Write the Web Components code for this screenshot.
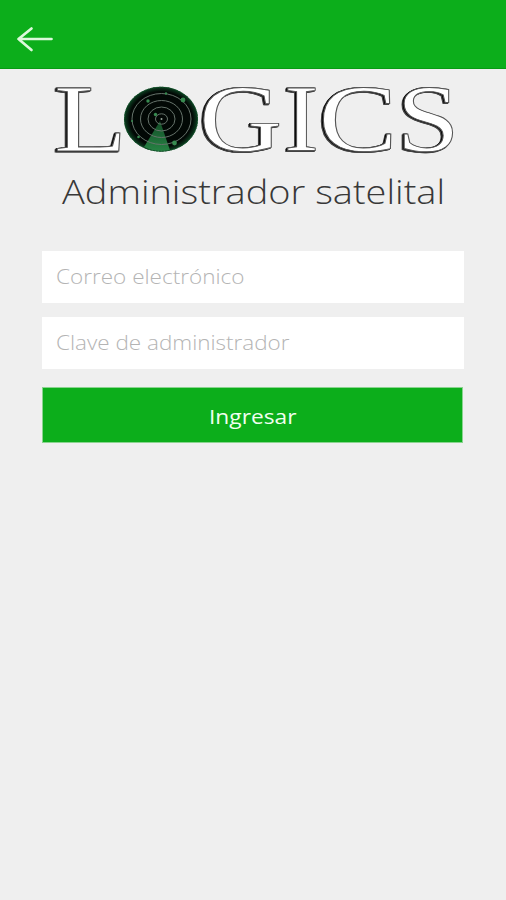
<!DOCTYPE html>
<html lang="es">
<head>
<meta charset="utf-8">
<title>Administrador satelital</title>
<style>
html,body{margin:0;height:100%;background:#efefef}
</style>
</head>
<body>
<login-screen></login-screen>
<script>
// Wide text: a line of text fitted to a given ink width.
class WideText extends HTMLElement {
  connectedCallback() {
    const a = n => this.getAttribute(n);
    this.attachShadow({mode: 'open'}).innerHTML = `
      <style>:host{display:block;line-height:0}
      svg{display:block;overflow:visible}
      text{font-family:"Open Sans","Noto Sans",sans-serif;font-size:${a('size')}px;font-weight:${a('weight')};fill:currentColor}</style>
      <svg width="${a('width')}" height="${a('height')}"><text x="0" y="${a('baseline')}" textLength="${a('width')}" lengthAdjust="spacingAndGlyphs"></text></svg>`;
    this.shadowRoot.querySelector('text').textContent = a('text');
  }
}
customElements.define('wide-text', WideText);

class TopBar extends HTMLElement {
  connectedCallback() {
    this.attachShadow({mode: 'open'}).innerHTML = `
      <style>:host{display:flex;box-sizing:border-box;height:69px;padding:26px 0 0 16px;background:#0cae1b;border-bottom:1px solid #079b13}
      svg{display:block}</style>
      <svg width="37" height="26" viewBox="0 0 37 26" fill="none" stroke="#dcf9db" stroke-width="2.7" stroke-linecap="round" stroke-linejoin="round"><path d="M35.5 13H2.5M15.5 2.5L2.5 13L15.5 24"/></svg>`;
  }
}
customElements.define('top-bar', TopBar);

class BrandLogo extends HTMLElement {
  connectedCallback() {
    const glyphs = [['L',53.8,1.27],['G',199,1.22],['I',284,1.11],['C',318.6,1.25],['S',396.5,1.2]];
    const letters = glyphs.map(([c,x,s]) =>
      `<text transform="translate(${x} 151) scale(${s} 1)">${c}</text>`).join('');
    const rings = [[6,5.2],[13.5,12],[21,18.5],[29.5,25.5]].map(([x,y]) => `<ellipse rx="${x}" ry="${y}"/>`).join('');
    this.attachShadow({mode: 'open'}).innerHTML = `
      <style>:host{display:block;height:90px}
      svg{display:block;overflow:visible}
      text{font-family:"Liberation Serif",serif;font-size:94.5px;fill:#fff;stroke:#555;stroke-width:.9}
      .word{filter:drop-shadow(-1px 0 0 #080808) drop-shadow(-1px 1px 0 rgba(8,8,8,.75))}</style>
      <svg width="506" height="90" viewBox="0 69 506 90">
        <defs><radialGradient id="disc"><stop offset=".85" stop-color="#020805"/><stop offset="1" stop-color="#0c4222"/></radialGradient>
        <linearGradient id="beam" x1="0" y1="0" x2="0" y2="1"><stop offset="0" stop-color="#134d27"/><stop offset="1" stop-color="#278344"/></linearGradient></defs>
        <g class="word">${letters}</g>
        <ellipse cx="161" cy="119.2" rx="37" ry="32.5" fill="url(#disc)"/>
        <path d="M160 121L144 147Q156 153.5 170 150.3Z" fill="url(#beam)"/>
        <g transform="translate(161.5 119)" fill="none" stroke="#66736b" stroke-width="1">${rings}</g>
        <ellipse cx="161" cy="119.2" rx="36.5" ry="32" fill="none" stroke="#14552b" stroke-width="1" stroke-dasharray="2 1"/>
        <g fill="#378b50"><circle cx="183" cy="100" r="2.4"/><circle cx="148" cy="101" r="1.7"/><circle cx="174.5" cy="143" r="2.4"/><circle cx="155.5" cy="114.5" r="1.7"/><circle cx="138.5" cy="137" r="1.3"/><circle cx="166" cy="93.5" r="1.2"/><circle cx="132" cy="121" r="1"/></g>
        <circle cx="161.5" cy="119" r="1" fill="#9aa89e"/>
      </svg>`;
  }
}
customElements.define('brand-logo', BrandLogo);

class FormField extends HTMLElement {
  connectedCallback() {
    this.attachShadow({mode: 'open'}).innerHTML = `
      <style>:host{display:block;box-sizing:border-box;padding-left:14px;background:#fff;color:#b4b4b4}</style><slot></slot>`;
  }
}
customElements.define('form-field', FormField);

class SubmitButton extends HTMLElement {
  connectedCallback() {
    this.attachShadow({mode: 'open'}).innerHTML = `
      <style>:host{display:block}
      button{display:flex;justify-content:center;box-sizing:border-box;width:100%;height:100%;margin:0;padding:0;border:1px solid #8ad48f;background:#0cae1b;color:#f1fff0}</style>
      <button><slot></slot></button>`;
  }
}
customElements.define('submit-button', SubmitButton);

class LoginScreen extends HTMLElement {
  connectedCallback() {
    this.attachShadow({mode: 'open'}).innerHTML = `
      <style>
      :host{display:flex;flex-direction:column;width:506px;height:900px;background:#efefef;overflow:hidden}
      .title{margin-left:61.5px;height:92px;color:#383838}
      form{display:flex;flex-direction:column;margin:0 42px}
      .mail{height:52px;margin-bottom:14px}
      .key{height:52px;margin-bottom:18px}
      submit-button{width:421px;height:56px}
      </style>
      <top-bar></top-bar>
      <brand-logo></brand-logo>
      <wide-text class="title" text="Administrador satelital" size="33" weight="300" width="383" height="92" baseline="45.3"></wide-text>
      <form>
        <form-field class="mail"><wide-text text="Correo electrónico" size="20" weight="300" width="188.5" height="52" baseline="33"></wide-text></form-field>
        <form-field class="key"><wide-text text="Clave de administrador" size="20" weight="300" width="233.5" height="52" baseline="33"></wide-text></form-field>
        <submit-button><wide-text text="Ingresar" size="20" weight="400" width="87.5" height="54" baseline="35.7"></wide-text></submit-button>
      </form>`;
  }
}
customElements.define('login-screen', LoginScreen);
</script>
</body>
</html>
